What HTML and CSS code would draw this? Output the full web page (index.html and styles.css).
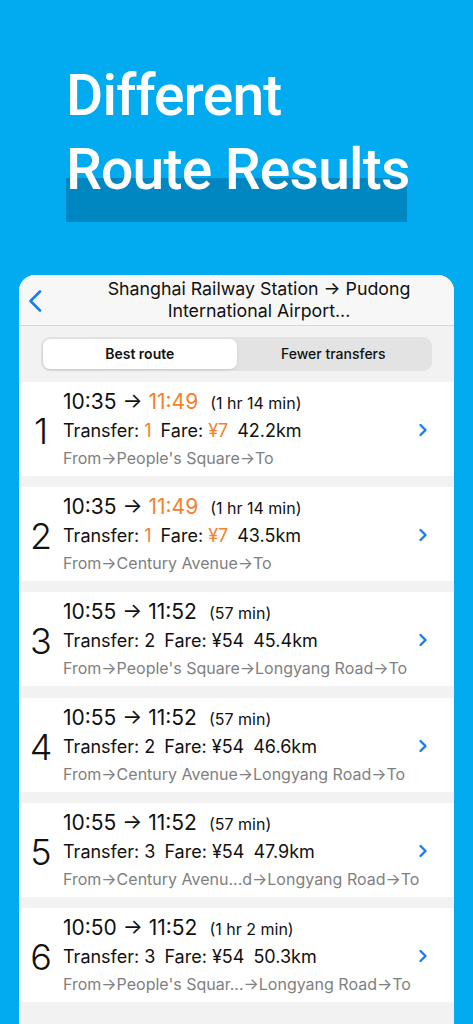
FILE: index.html
```html
<!DOCTYPE html>
<html lang="en">
<head>
	<meta charset="UTF-8"/>
	<meta name="viewport" content="width=device-width, initial-scale=1.0"/>
	<title>Different Route Results</title>
	<link rel="stylesheet" href="styles.css">
</head>
<body>
	<header class="hero">
		<h1><span>Different</span><span class="mark">Route Results</span></h1>
	</header>

	<div class="card">

		<div class="nav">
			<div class="back">
				<svg width="14" height="22" viewBox="0 0 14 22"><path d="M12 1.5 L2.5 11 L12 20.5" fill="none" stroke="#1a7cf5" stroke-width="2.6" stroke-linecap="round" stroke-linejoin="round"/></svg>
			</div>
			<div class="nav-title">Shanghai Railway Station → Pudong<br>International Airport...</div>
		</div>

		<div class="tabs">
			<div class="segment">
				<div class="seg active">Best route</div>
				<div class="seg">Fewer transfers</div>
			</div>
		</div>

		<div class="routes">

			<div class="route">
				<div class="num">1</div>
				<div class="info">
					<p class="time">10:35 → <span class="hl">11:49</span><small>(1 hr 14 min)</small></p>
					<p class="meta"><span>Transfer: <em>1</em></span><span>Fare: <em>¥7</em></span><span>42.2km</span></p>
					<p class="path">From→People's Square→To</p>
				</div>
				<div class="go"><svg width="10" height="14" viewBox="0 0 10 14"><path d="M2.5 2 L7.5 7 L2.5 12" fill="none" stroke="#1a7cf5" stroke-width="2.4" stroke-linecap="round" stroke-linejoin="round"/></svg></div>
			</div>

			<div class="route">
				<div class="num">2</div>
				<div class="info">
					<p class="time">10:35 → <span class="hl">11:49</span><small>(1 hr 14 min)</small></p>
					<p class="meta"><span>Transfer: <em>1</em></span><span>Fare: <em>¥7</em></span><span>43.5km</span></p>
					<p class="path">From→Century Avenue→To</p>
				</div>
				<div class="go"><svg width="10" height="14" viewBox="0 0 10 14"><path d="M2.5 2 L7.5 7 L2.5 12" fill="none" stroke="#1a7cf5" stroke-width="2.4" stroke-linecap="round" stroke-linejoin="round"/></svg></div>
			</div>

			<div class="route">
				<div class="num">3</div>
				<div class="info">
					<p class="time">10:55 → 11:52<small>(57 min)</small></p>
					<p class="meta"><span>Transfer: 2</span><span>Fare: ¥54</span><span>45.4km</span></p>
					<p class="path">From→People's Square→Longyang Road→To</p>
				</div>
				<div class="go"><svg width="10" height="14" viewBox="0 0 10 14"><path d="M2.5 2 L7.5 7 L2.5 12" fill="none" stroke="#1a7cf5" stroke-width="2.4" stroke-linecap="round" stroke-linejoin="round"/></svg></div>
			</div>

			<div class="route">
				<div class="num">4</div>
				<div class="info">
					<p class="time">10:55 → 11:52<small>(57 min)</small></p>
					<p class="meta"><span>Transfer: 2</span><span>Fare: ¥54</span><span>46.6km</span></p>
					<p class="path">From→Century Avenue→Longyang Road→To</p>
				</div>
				<div class="go"><svg width="10" height="14" viewBox="0 0 10 14"><path d="M2.5 2 L7.5 7 L2.5 12" fill="none" stroke="#1a7cf5" stroke-width="2.4" stroke-linecap="round" stroke-linejoin="round"/></svg></div>
			</div>

			<div class="route">
				<div class="num">5</div>
				<div class="info">
					<p class="time">10:55 → 11:52<small>(57 min)</small></p>
					<p class="meta"><span>Transfer: 3</span><span>Fare: ¥54</span><span>47.9km</span></p>
					<p class="path">From→Century Avenu...d→Longyang Road→To</p>
				</div>
				<div class="go"><svg width="10" height="14" viewBox="0 0 10 14"><path d="M2.5 2 L7.5 7 L2.5 12" fill="none" stroke="#1a7cf5" stroke-width="2.4" stroke-linecap="round" stroke-linejoin="round"/></svg></div>
			</div>

			<div class="route">
				<div class="num">6</div>
				<div class="info">
					<p class="time">10:50 → 11:52<small>(1 hr 2 min)</small></p>
					<p class="meta"><span>Transfer: 3</span><span>Fare: ¥54</span><span>50.3km</span></p>
					<p class="path">From→People's Squar...→Longyang Road→To</p>
				</div>
				<div class="go"><svg width="10" height="14" viewBox="0 0 10 14"><path d="M2.5 2 L7.5 7 L2.5 12" fill="none" stroke="#1a7cf5" stroke-width="2.4" stroke-linecap="round" stroke-linejoin="round"/></svg></div>
			</div>

		</div>
	</div>
</body>
</html>
```

FILE: styles.css
```css
*{
	margin: 0;
	padding: 0;
	box-sizing: border-box;
}
body{
	background: #02aaf0;
	font-family: Inter, "Noto Sans", sans-serif;
	height: 1024px;
	overflow: hidden;
}
.hero{
	padding: 59px 0 0 66px;
	height: 275px;
}
.hero h1{
	font-family: Roboto, "Liberation Sans", sans-serif;
	font-weight: 500;
	font-size: 57px;
	line-height: 74px;
	color: #fff;
	letter-spacing: -0.8px;
	white-space: nowrap;
}
.hero h1 span{
	display: block;
}
.hero h1 .mark{
	width: 341px;
	height: 89px;
	background: linear-gradient(transparent 0, transparent 45px, #0087c2 45px);
}
.card{
	margin: 0 19px;
	background: #f2f2f2;
	border-radius: 16px 16px 0 0;
	overflow: hidden;
	height: 749px;
}
.nav{
	display: flex;
	height: 51px;
	background: #f7f7f7;
	border-bottom: 1px solid #d6d6d6;
}
.back{
	width: 45px;
	padding: 15px 0 0 9px;
}
.nav-title{
	flex: 1;
	text-align: center;
	font-size: 17.8px;
	line-height: 22px;
	color: #111;
	padding-top: 3px;
}
.tabs{
	padding: 11px 22px;
}
.segment{
	display: flex;
	background: #e3e3e3;
	border-radius: 9px;
	padding: 2px;
	height: 34px;
}
.seg{
	flex: 1;
	text-align: center;
	font-size: 14px;
	line-height: 30px;
	font-weight: 500;
	color: #111;
}
.seg.active{
	background: #fff;
	border-radius: 7px;
	font-weight: 600;
	box-shadow: 0 1px 3px rgba(0,0,0,.12);
}
.routes{
	display: flex;
	flex-direction: column;
	gap: 11.2px;
}
.route{
	display: flex;
	align-items: center;
	height: 94px;
	background: #fff;
}
.num{
	width: 44px;
	text-align: center;
	font-size: 36px;
	font-weight: 300;
	color: #111;
	padding-top: 4px;
}
.info{
	flex: 1;
	min-width: 0;
	padding-top: 2px;
	color: #111;
	white-space: nowrap;
}
.time{
	font-size: 21px;
	line-height: 28px;
}
.time small{
	font-size: 16px;
	margin-left: 12px;
}
.hl, em{
	color: #f4812c;
	font-style: normal;
}
.meta{
	font-size: 18px;
	line-height: 28px;
}
.meta span{
	margin-right: 9px;
}
.path{
	font-size: 16px;
	line-height: 27px;
	color: #808080;
}
.go{
	width: 36px;
	flex-shrink: 0;
	padding-top: 4px;
}
```
